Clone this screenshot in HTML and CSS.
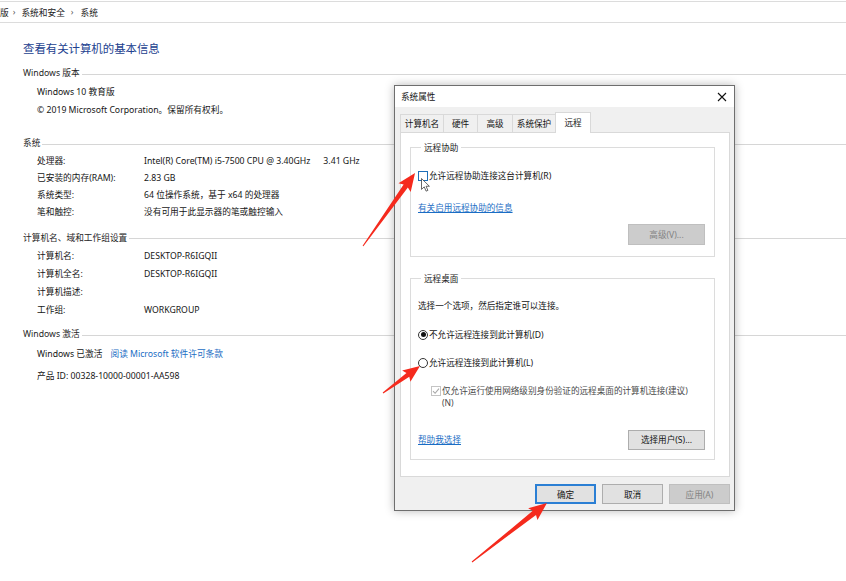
FILE: index.html
```html
<!DOCTYPE html>
<html lang="zh-CN">
<head>
<meta charset="utf-8">
<title>系统</title>
<link rel="stylesheet" href="styles.css">
</head>
<body>
<div class="page">
  <div class="crumbs">
    <span class="crumb first">版</span><span class="sep s-a">›</span><span class="crumb">系统和安全</span><span class="sep">›</span><span class="crumb">系统</span>
  </div>
  <main class="content">
    <h1 class="title">查看有关计算机的基本信息</h1>

    <section class="sec s1">
      <h2 class="sec-h">Windows 版本</h2>
      <div class="row r1">Windows 10 教育版</div>
      <div class="row r2">© 2019 Microsoft Corporation。保留所有权利。</div>
    </section>

    <section class="sec s2">
      <h2 class="sec-h">系统</h2>
      <dl class="kv kv2">
        <dt>处理器:</dt><dd>Intel(R) Core(TM) i5-7500 CPU @ 3.40GHz<span class="gap">3.41 GHz</span></dd>
        <dt>已安装的内存(RAM):</dt><dd>2.83 GB</dd>
        <dt>系统类型:</dt><dd>64 位操作系统，基于 x64 的处理器</dd>
        <dt>笔和触控:</dt><dd>没有可用于此显示器的笔或触控输入</dd>
      </dl>
    </section>

    <section class="sec s3">
      <h2 class="sec-h">计算机名、域和工作组设置</h2>
      <dl class="kv kv3">
        <dt>计算机名:</dt><dd>DESKTOP-R6IGQII</dd>
        <dt>计算机全名:</dt><dd>DESKTOP-R6IGQII</dd>
        <dt>计算机描述:</dt><dd></dd>
        <dt>工作组:</dt><dd>WORKGROUP</dd>
      </dl>
    </section>

    <section class="sec s4">
      <h2 class="sec-h">Windows 激活</h2>
      <div class="row a1">Windows 已激活<a class="plink">阅读 Microsoft 软件许可条款</a></div>
      <div class="row a2">产品 ID: 00328-10000-00001-AA598</div>
    </section>
  </main>

  <div class="dialog">
    <div class="dlg-title">
      <span>系统属性</span>
      <svg class="close" width="10" height="10" viewBox="0 0 10 10"><path d="M1 1L9 9M9 1L1 9" stroke="#111" stroke-width="1.1" fill="none"/></svg>
    </div>
    <div class="dlg-body">
      <div class="tabs">
        <div class="tab t1">计算机名</div>
        <div class="tab t2">硬件</div>
        <div class="tab t3">高级</div>
        <div class="tab t4">系统保护</div>
        <div class="tab t5 active">远程</div>
      </div>
      <div class="panel">
        <fieldset class="group g1">
          <legend>远程协助</legend>
          <div class="opt o-ra"><span class="cb hover"></span>允许远程协助连接这台计算机(R)</div>
          <a class="dlink l-ra">有关启用远程协助的信息</a>
          <div class="btn-line b-adv"><button class="btn disabled">高级(V)...</button></div>
        </fieldset>
        <fieldset class="group g2">
          <legend>远程桌面</legend>
          <div class="note">选择一个选项，然后指定谁可以连接。</div>
          <div class="opt o-d1"><span class="radio on"></span>不允许远程连接到此计算机(D)</div>
          <div class="opt o-d2"><span class="radio"></span>允许远程连接到此计算机(L)</div>
          <div class="opt nla"><span class="cb dis"><svg width="8" height="8" viewBox="0 0 8 8"><path d="M1 4.2L3.1 6.3L7 1.6" stroke="#a8a8a8" stroke-width="1.1" fill="none"/></svg></span><span class="nla-text">仅允许运行使用网络级别身份验证的远程桌面的计算机连接(建议)<br>(N)</span></div>
          <div class="help-line">
            <a class="dlink">帮助我选择</a>
            <button class="btn">选择用户(S)...</button>
          </div>
        </fieldset>
      </div>
      <div class="dlg-buttons">
        <button class="btn wide default">确定</button>
        <button class="btn wide">取消</button>
        <button class="btn wide disabled">应用(A)</button>
      </div>
    </div>
  </div>

  <svg class="annot" width="846" height="581" viewBox="0 0 846 581">
    <defs>
      <g id="cursor">
        <path d="M0 0L0 16L4 12.3L6.8 18.6L9.4 17.5L6.7 11.4L11.6 11.4Z" fill="#fff" stroke="#222" stroke-width="1" stroke-linejoin="round"/>
      </g>
    </defs>
    <g transform="translate(421.5 177.5) scale(0.68)"><use href="#cursor"/></g>
    <polygon class="arrow" transform="translate(363 245) rotate(-54.5)" points="0,-0.5 73.6,-2.6 71.6,-7.5 89.6,0 71.6,7.5 73.6,2.6 0,0.5"/>
    <polygon class="arrow" transform="translate(383 392) rotate(-36.1)" points="0,-0.5 30.8,-2.4 28.8,-7 45.8,0 28.8,7 30.8,2.4 0,0.5"/>
    <polygon class="arrow" transform="translate(472 561) rotate(-38.2)" points="0,-0.5 79.4,-2.6 77.4,-7.5 95.4,0 77.4,7.5 79.4,2.6 0,0.5"/>
  </svg>
</div>
</body>
</html>
```

FILE: styles.css
```css
* { box-sizing: border-box; }
html, body { margin: 0; padding: 0; }
body {
  width: 846px;
  height: 581px;
  overflow: hidden;
  background: #fff;
  font-family: "Noto Sans", "Noto Sans CJK SC", sans-serif;
  font-size: 8.7px;
  color: #151515;
}
.page { position: relative; width: 846px; height: 581px; }

/* breadcrumb */
.crumbs {
  margin-top: 1px;
  height: 22px;
  border-top: 1px solid #dcdcdc;
  border-bottom: 1px solid #dcdcdc;
  display: flex;
  align-items: center;
  color: #222;
  white-space: nowrap;
}
.crumb.first { margin-left: 0; }
.sep { padding: 0 7px 0 6px; color: #555; }
.sep.s-a { padding: 0 6px 0 4px; }

/* main content */
.content { padding-left: 23px; }
.title {
  margin: 18px 0 0;
  font-size: 11.4px;
  font-weight: normal;
  line-height: 16px;
  color: #22418f;
}
.sec-h {
  display: flex;
  align-items: center;
  margin: 0;
  font-size: 8.7px;
  font-weight: normal;
  line-height: 14px;
  color: #262626;
  white-space: nowrap;
}
.sec-h::after {
  content: "";
  flex: 1;
  height: 1px;
  background: #d6d6d6;
  margin-left: 2px;
  margin-top: 2px;
}
.s1 .sec-h { margin-top: 9px; }
.row { padding-left: 14px; line-height: 18px; white-space: nowrap; }
.r1 { margin-top: 3px; }
.s2 .sec-h { margin-top: 17px; }
.kv {
  margin: 0;
  padding-left: 14px;
  display: grid;
  grid-template-columns: 107px 1fr;
  white-space: nowrap;
}
.kv dt, .kv dd { margin: 0; }
.kv2 { margin-top: 2.5px; line-height: 17px; }
.gap { margin-left: 13px; }
.s3 .sec-h { margin-top: 10px; }
.kv3 { margin-top: 2.7px; line-height: 18px; }
.s4 .sec-h { margin-top: 8.3px; }
.a1 { margin-top: 3.4px; }
.a2 { margin-top: 4px; }
.plink { color: #1a6dc4; margin-left: 8px; }

/* dialog window */
.dialog {
  position: absolute;
  left: 394px;
  top: 84px;
  width: 341px;
  height: 426px;
  border: 1px solid #6e6e6e;
  background: #f0f0f0;
  box-shadow: 0 0 9px rgba(0, 0, 0, 0.28);
  font-size: 8.6px;
  color: #141414;
  display: flex;
  flex-direction: column;
}
.dlg-title {
  height: 21px;
  background: #fff;
  display: flex;
  align-items: center;
  justify-content: space-between;
  padding: 0 7px 0 6px;
}
.close { display: block; }
.dlg-body { flex: 1; padding: 5px 4px 0 5px; display: flex; flex-direction: column; }

.tabs {
  display: flex;
  align-items: flex-end;
  height: 21px;
  margin-bottom: -1px;
  position: relative;
  z-index: 1;
}
.tab {
  height: 18px;
  margin-bottom: 1px;
  border: 1px solid #d9d9d9;
  border-bottom: none;
  background: #f0f0f0;
  display: flex;
  align-items: center;
  justify-content: center;
  margin-right: -1px;
  white-space: nowrap;
}
.t1 { width: 44px; }
.t2 { width: 35px; }
.t3 { width: 36px; }
.t4 { width: 44px; }
.t5 { width: 36px; }
.tab.active {
  height: 21px;
  margin-bottom: 0;
  background: #fff;
  padding-bottom: 2px;
}

.panel {
  height: 345px;
  background: #fff;
  border: 1px solid #d9d9d9;
  padding: 0 14px 0 9px;
}

.group {
  margin: 0;
  border: 1px solid #dcdcdc;
  padding: 0 9px 0 7px;
  min-width: 0;
}
.group legend {
  padding: 0 3px;
  margin-left: 3px;
  line-height: 12px;
  color: #222;
}
.g1 { margin-top: 8.5px; padding-bottom: 11px; }
.g2 { margin-top: 16px; padding-bottom: 9px; }

.opt { display: flex; align-items: center; line-height: 14px; white-space: nowrap; }
.o-ra { margin-top: 15px; }
.cb {
  width: 10px;
  height: 10px;
  border: 1px solid #333;
  background: #fff;
  margin-right: 1px;
  flex: none;
  display: flex;
  align-items: center;
  justify-content: center;
}
.cb.hover { border-color: #1f6fb8; }
.cb.dis { border-color: #c4c4c4; }
.dlink {
  display: block;
  color: #1a6dc4;
  text-decoration: underline;
  line-height: 14px;
  width: max-content;
}
.l-ra { margin-top: 18px; }
.btn-line { display: flex; justify-content: flex-end; margin-top: 9px; }

.note { margin-top: 14px; line-height: 14px; }
.o-d1 { margin-top: 15px; }
.o-d2 { margin-top: 14px; }
.radio {
  width: 10px;
  height: 10px;
  border: 1px solid #333;
  border-radius: 50%;
  background: #fff;
  margin-right: 1px;
  flex: none;
  display: flex;
  align-items: center;
  justify-content: center;
}
.radio.on::after {
  content: "";
  width: 5px;
  height: 5px;
  border-radius: 50%;
  background: #111;
}
.nla { margin-top: 15px; margin-left: 13px; align-items: flex-start; }
.nla .cb { margin-top: 1px; }
.nla-text { line-height: 12px; color: #4a4a4a; }
.help-line {
  margin-top: 21px;
  display: flex;
  align-items: center;
  justify-content: space-between;
}

.btn {
  font-family: "Noto Sans", "Noto Sans CJK SC", sans-serif;
  font-size: 8.6px;
  color: #141414;
  height: 21px;
  width: 77px;
  padding: 0;
  border: 1px solid #adadad;
  background: #e1e1e1;
  white-space: nowrap;
}
.btn.disabled { background: #cccccc; border-color: #bfbfbf; color: #838383; }
.help-line .btn { height: 20px; }

.dlg-buttons {
  margin-top: 7px;
  display: flex;
  justify-content: flex-end;
  gap: 6px;
}
.btn.wide { width: 61px; height: 20px; }
.btn.default { border-color: #2b7fd4; box-shadow: inset 0 0 0 1px #2b7fd4; }

/* annotations */
.annot { position: absolute; left: 0; top: 0; pointer-events: none; }
.arrow { fill: #f52a1d; }
```
